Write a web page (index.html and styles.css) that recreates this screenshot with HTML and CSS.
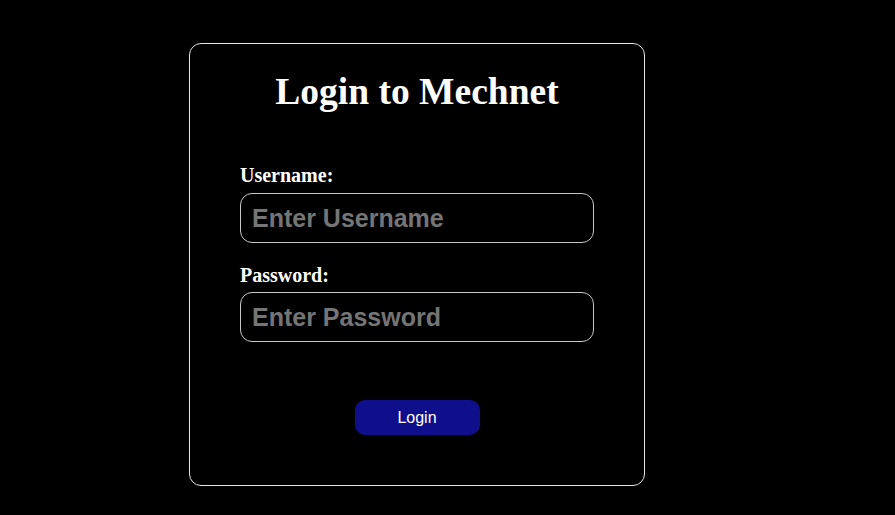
FILE: index.html
```html
<!DOCTYPE html>
<html>
<head>
<meta charset="utf-8">
<title>Login to Mechnet</title>
<link rel="stylesheet" href="styles.css">
</head>
<body>
<div class="card">
  <h1 class="title">Login to Mechnet</h1>
  <form class="form">
    <label class="label" for="u">Username:</label>
    <input class="field" id="u" type="text" placeholder="Enter Username">
    <label class="label second" for="p">Password:</label>
    <input class="field" id="p" type="password" placeholder="Enter Password">
    <div class="actions">
      <button class="btn" type="button">Login</button>
    </div>
  </form>
</div>
</body>
</html>
```
FILE: styles.css
```css
html, body {
  margin: 0;
  padding: 0;
  background: #000;
}
body {
  padding-top: 43px;
  padding-left: 189px;
  font-family: "Liberation Serif", "Times New Roman", serif;
  color: #fff;
}
.card {
  box-sizing: border-box;
  width: 456px;
  height: 443px;
  border: 1px solid #e6e6e6;
  border-radius: 12px;
  padding: 26px 50px 0 50px;
}
.title {
  margin: 0;
  text-align: center;
  font-size: 37.5px;
  font-weight: bold;
  line-height: 43px;
}
.form {
  display: flex;
  flex-direction: column;
  margin-top: 51px;
}
.label {
  display: block;
  font-size: 20px;
  font-weight: bold;
  line-height: 22px;
  margin-bottom: 7px;
}
.label.second {
  margin-top: 21px;
  margin-bottom: 6px;
}
.field {
  box-sizing: border-box;
  width: 354px;
  height: 50px;
  border: 1px solid #c8c8c8;
  border-radius: 12px;
  background: #000;
  color: #fff;
  padding: 0 11px;
  font-family: "Liberation Sans", Arial, sans-serif;
  font-size: 25px;
  font-weight: bold;
  outline: none;
}
.field::placeholder {
  color: #757575;
  opacity: 1;
}
.actions {
  display: flex;
  justify-content: center;
  margin-top: 58px;
}
.btn {
  width: 125px;
  height: 35px;
  border: none;
  border-radius: 10px;
  background: #0f0f8c;
  color: #fff;
  font-family: "Liberation Sans", Arial, sans-serif;
  font-size: 16px;
  padding: 0;
}
```
